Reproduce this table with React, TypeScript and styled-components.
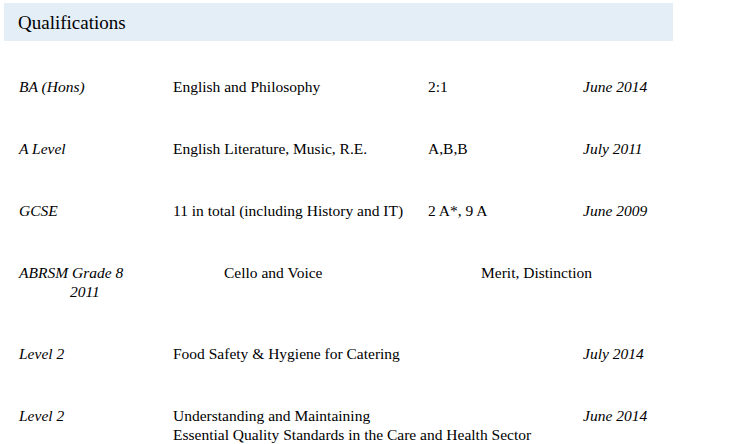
import styled, { createGlobalStyle } from 'styled-components';

const GlobalStyle = createGlobalStyle`
  html, body {
    margin: 0;
    padding: 0;
    background: #ffffff;
  }
`;

const serif = `'Liberation Serif', 'Times New Roman', Tinos, 'DejaVu Serif', serif`;

const Page = styled.div`
  width: 735px;
  height: 444px;
  overflow: hidden;
  font-family: ${serif};
  color: #000000;
`;

const SectionHeader = styled.div`
  margin: 3px 62px 0 4px;
  height: 38px;
  padding-left: 14px;
  background: #e4eef7;
  display: flex;
  align-items: center;
`;

const SectionTitle = styled.h2`
  margin: 0;
  font-family: ${serif};
  font-size: 19px;
  font-weight: normal;
  line-height: 1;
`;

const List = styled.div`
  display: flex;
  flex-direction: column;
  gap: 43px;
  padding: 36px 0 0 19px;
`;

const Row = styled.div`
  display: grid;
  grid-template-columns: 154px 255px 155px 1fr;
  font-family: ${serif};
  font-size: 15.5px;
  line-height: 19px;
`;

const Cell = styled.div<{ $italic?: boolean; $indent?: number }>`
  font-style: ${(p) => (p.$italic ? 'italic' : 'normal')};
  padding-left: ${(p) => p.$indent ?? 0}px;
  white-space: nowrap;
`;

const Line = styled.div<{ $indent?: number }>`
  padding-left: ${(p) => p.$indent ?? 0}px;
`;

interface Qualification {
  level: string[];
  subject: string[];
  grade: string;
  date: string;
  shift?: number;
}

const qualifications: Qualification[] = [
  { level: ['BA (Hons)'], subject: ['English and Philosophy'], grade: '2:1', date: 'June 2014' },
  { level: ['A Level'], subject: ['English Literature, Music, R.E.'], grade: 'A,B,B', date: 'July 2011' },
  { level: ['GCSE'], subject: ['11 in total (including History and IT)'], grade: '2 A*, 9 A', date: 'June 2009' },
  { level: ['ABRSM Grade 8', '2011'], subject: ['Cello and Voice'], grade: 'Merit, Distinction', date: '', shift: 51 },
  { level: ['Level 2'], subject: ['Food Safety & Hygiene for Catering'], grade: '', date: 'July 2014' },
  {
    level: ['Level 2'],
    subject: ['Understanding and Maintaining', 'Essential Quality Standards in the Care and Health Sector'],
    grade: '',
    date: 'June 2014',
  },
];

export default function App() {
  return (
    <Page>
      <GlobalStyle />
      <SectionHeader>
        <SectionTitle>Qualifications</SectionTitle>
      </SectionHeader>
      <List>
        {qualifications.map((q, i) => (
          <Row key={i}>
            <Cell $italic>
              {q.level.map((l, j) => (
                <Line key={j} $indent={j > 0 ? q.shift : 0}>
                  {l}
                </Line>
              ))}
            </Cell>
            <Cell $indent={q.shift}>
              {q.subject.map((s, j) => (
                <Line key={j}>{s}</Line>
              ))}
            </Cell>
            <Cell $indent={q.shift ? q.shift + 2 : 0}>{q.grade}</Cell>
            <Cell $italic>{q.date}</Cell>
          </Row>
        ))}
      </List>
    </Page>
  );
}
